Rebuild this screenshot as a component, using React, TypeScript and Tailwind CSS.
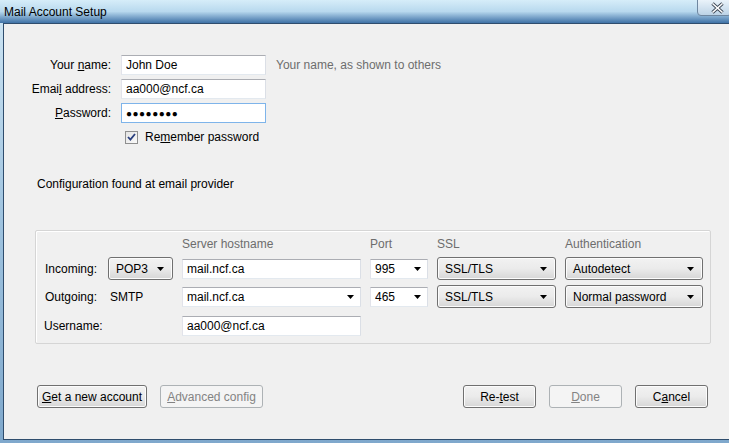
import React from "react";

const font = { fontFamily: '"Liberation Sans", Arial, sans-serif' };

function Arrow() {
  return (
    <svg width="7" height="4" viewBox="0 0 7 4" className="shrink-0">
      <path d="M0 0h7L3.5 4z" fill="#000" />
    </svg>
  );
}

function TextBox({
  value,
  width,
  focused,
  arrow,
}: {
  value: React.ReactNode;
  width: string;
  focused?: boolean;
  arrow?: boolean;
}) {
  return (
    <div
      className={`${width} h-[20px] flex items-center bg-white border pl-[4px] pr-[6px] ${
        focused ? "border-[#7eb4ea]" : "border-[#abadb3] border-l-[#e2e3ea] border-r-[#dbdfe6] border-b-[#e3e9ef]"
      }`}
    >
      <span className="flex-1 text-[12px] text-black leading-none truncate">{value}</span>
      {arrow && <Arrow />}
    </div>
  );
}

function Dropdown({ value, width }: { value: string; width: string }) {
  return (
    <div
      className={`${width} h-[23px] flex items-center rounded-[3px] border border-[#707070] bg-gradient-to-b from-[#f2f2f2] via-[#ebebeb] to-[#d6d6d6] pl-[7px] pr-[8px] shadow-[inset_0_0_0_1px_#fcfcfc]`}
    >
      <span className="flex-1 text-[12px] text-black leading-none">{value}</span>
      <Arrow />
    </div>
  );
}

function Button({
  children,
  width,
  disabled,
}: {
  children: React.ReactNode;
  width: string;
  disabled?: boolean;
}) {
  return (
    <div
      className={`${width} h-[23px] flex items-center justify-center rounded-[3px] text-[12px] leading-none border ${
        disabled
          ? "border-[#adb2b5] bg-[#f4f4f4] text-[#838383]"
          : "border-[#707070] bg-gradient-to-b from-[#f2f2f2] via-[#ebebeb] to-[#d6d6d6] text-black shadow-[inset_0_0_0_1px_#fcfcfc]"
      }`}
    >
      {children}
    </div>
  );
}

function Field({ label, children }: { label: React.ReactNode; children: React.ReactNode }) {
  return (
    <div className="flex items-center h-[20px]">
      <div className="w-[107px] text-right text-[12px] text-black">{label}</div>
      <div className="ml-[10px]">{children}</div>
    </div>
  );
}

export default function App() {
  return (
    <div
      className="w-[729px] h-[443px] overflow-hidden flex flex-col bg-gradient-to-b from-[#cfe6f4] via-[#9fc3df] to-[#7fa8cc]"
      style={font}
    >
      {/* title bar */}
      <div className="relative h-[23px] shrink-0 bg-gradient-to-b from-[#d6edf9] via-[#b8d9ee] to-[#3f72a6]">
        <div className="pl-[4px] pt-[3px] text-[12px] text-black">Mail Account Setup</div>
        <div className="absolute right-[-3px] top-[-1px] w-[35px] h-[17px] rounded-b-[4px] border border-[#6f87a0] bg-gradient-to-b from-[#eaf3fa] to-[#bcd3e6] flex items-center justify-center pl-[6px]">
          <svg width="15" height="12" viewBox="0 0 15 12">
            <path d="M2.5 1.5l5 4.5 5-4.5M2.5 10.5l5-4.5 5 4.5" stroke="#3e4a58" strokeWidth="3.4" fill="none" />
            <path d="M2.5 1.5l5 4.5 5-4.5M2.5 10.5l5-4.5 5 4.5" stroke="#fff" strokeWidth="1.6" fill="none" />
          </svg>
        </div>
      </div>

      {/* client area */}
      <div className="flex-1 ml-[3px] mb-[3px] border-t border-l border-b border-[#2f4d6d] bg-[#f0f0f0] flex flex-col">
        <div className="pt-[31px] flex flex-col gap-[4px]">
          <Field
            label={
              <>
                Your <u>n</u>ame:
              </>
            }
          >
            <div className="flex items-center">
              <TextBox value="John Doe" width="w-[145px]" />
              <span className="ml-[10px] text-[12px] text-[#6d6d6d]">Your name, as shown to others</span>
            </div>
          </Field>
          <Field
            label={
              <>
                Emai<u>l</u> address:
              </>
            }
          >
            <TextBox value="aa000@ncf.ca" width="w-[145px]" />
          </Field>
          <Field
            label={
              <>
                <u>P</u>assword:
              </>
            }
          >
            <TextBox value={<span className="tracking-[0.5px] text-[10px]">●●●●●●●●</span>} width="w-[145px]" focused />
          </Field>
        </div>

        <div className="flex items-center ml-[121px] mt-[7px] h-[14px]">
          <div className="w-[13px] h-[13px] border border-[#8f8f8f] bg-gradient-to-br from-[#e4e4e4] to-[#fafafa] flex items-center justify-center">
            <svg width="9" height="8" viewBox="0 0 9 8">
              <path d="M1 4l2.4 2.6L8 1" stroke="#2a3f7e" strokeWidth="1.8" fill="none" />
            </svg>
          </div>
          <span className="ml-[7px] text-[12px] text-black">
            Re<u>m</u>ember password
          </span>
        </div>

        <div className="ml-[33px] mt-[31px] text-[12px] text-black">Configuration found at email provider</div>

        {/* server settings panel */}
        <div className="ml-[31px] mt-[37px] w-[676px] h-[114px] border border-[#d5d5d5] rounded-[2px] shadow-[inset_1px_1px_0_#fff] pl-[9px] pt-[4px]">
          <div className="grid grid-cols-[54px_65px_179px_58px_119px_138px] gap-x-[9px] items-center text-[12px]">
            <div />
            <div />
            <div className="h-[15px] text-[#6d6d6d]">Server hostname</div>
            <div className="h-[15px] text-[#6d6d6d]">Port</div>
            <div className="h-[15px] text-[#6d6d6d]">SSL</div>
            <div className="h-[15px] text-[#6d6d6d]">Authentication</div>

            <div className="mt-[7px]">Incoming:</div>
            <div className="mt-[7px]">
              <Dropdown value="POP3" width="w-[65px]" />
            </div>
            <div className="mt-[7px]">
              <TextBox value="mail.ncf.ca" width="w-[179px]" />
            </div>
            <div className="mt-[7px]">
              <TextBox value="995" width="w-[58px]" arrow />
            </div>
            <div className="mt-[7px]">
              <Dropdown value="SSL/TLS" width="w-[119px]" />
            </div>
            <div className="mt-[7px]">
              <Dropdown value="Autodetect" width="w-[138px]" />
            </div>

            <div className="mt-[5px]">Outgoing:</div>
            <div className="mt-[5px] pl-[2px]">SMTP</div>
            <div className="mt-[5px]">
              <TextBox value="mail.ncf.ca" width="w-[179px]" arrow />
            </div>
            <div className="mt-[5px]">
              <TextBox value="465" width="w-[58px]" arrow />
            </div>
            <div className="mt-[5px]">
              <Dropdown value="SSL/TLS" width="w-[119px]" />
            </div>
            <div className="mt-[5px]">
              <Dropdown value="Normal password" width="w-[138px]" />
            </div>

            <div className="mt-[8px] col-span-2 -ml-[1px]">Username:</div>
            <div className="mt-[8px]">
              <TextBox value="aa000@ncf.ca" width="w-[179px]" />
            </div>
          </div>
        </div>

        {/* dialog buttons */}
        <div className="mt-[41px] flex items-center pl-[33px] pr-[21px]">
          <Button width="w-[110px]">
            <span>
              <u>G</u>et a new account
            </span>
          </Button>
          <div className="ml-[13px]">
            <Button width="w-[103px]" disabled>
              <span>
                <u>A</u>dvanced config
              </span>
            </Button>
          </div>
          <div className="flex-1" />
          <Button width="w-[73px]">
            <span>
              Re-<u>t</u>est
            </span>
          </Button>
          <div className="ml-[13px]">
            <Button width="w-[73px]" disabled>
              <span>
                <u>D</u>one
              </span>
            </Button>
          </div>
          <div className="ml-[13px]">
            <Button width="w-[73px]">
              <span>
                C<u>a</u>ncel
              </span>
            </Button>
          </div>
        </div>
      </div>
    </div>
  );
}
